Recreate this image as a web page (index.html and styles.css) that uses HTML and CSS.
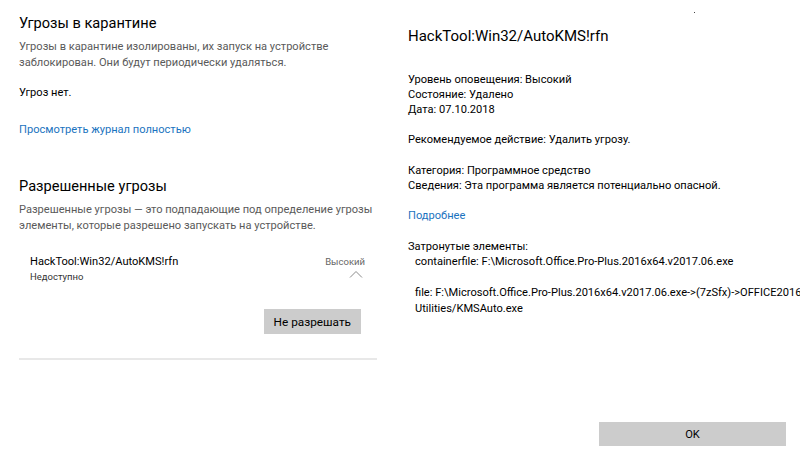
FILE: index.html
```html
<!DOCTYPE html>
<html lang="ru">
<head>
  <meta charset="UTF-8">
  <title>Защита от вирусов и угроз</title>
  <link rel="stylesheet" href="styles.css">
</head>
<body>
  <div class="page">
    <!-- left: quarantine + allowed threats -->
    <div class="left">
      <h1>Угрозы в карантине</h1>
      <p class="desc">Угрозы в карантине изолированы, их запуск на устройстве заблокирован. Они будут периодически удаляться.</p>
      <p class="none">Угроз нет.</p>
      <a class="link" href="#">Просмотреть журнал полностью</a>

      <h1 class="second">Разрешенные угрозы</h1>
      <p class="desc">Разрешенные угрозы — это подпадающие под определение угрозы элементы, которые разрешено запускать на устройстве.</p>

      <div class="threat">
        <div class="threat-head">
          <div>
            <div class="threat-name">HackTool:Win32/AutoKMS!rfn</div>
            <div class="threat-state">Недоступно</div>
          </div>
          <div class="threat-level">
            <span>Высокий</span>
            <svg class="chevron" width="14" height="8" viewBox="0 0 14 8"><path d="M1 7.5 L7 1.5 L13 7.5" fill="none" stroke="#8a8a8a" stroke-width="1"/></svg>
          </div>
        </div>
        <div class="threat-actions">
          <button class="btn">Не разрешать</button>
        </div>
      </div>
      <div class="divider"></div>
    </div>

    <!-- right: details dialog -->
    <div class="right">
      <span class="dot"></span>
      <h2>HackTool:Win32/AutoKMS!rfn</h2>
      <div class="group first">
        <div>Уровень оповещения: Высокий</div>
        <div>Состояние: Удалено</div>
        <div>Дата: 07.10.2018</div>
      </div>
      <div class="group g2">
        <div>Рекомендуемое действие: Удалить угрозу.</div>
      </div>
      <div class="group">
        <div>Категория: Программное средство</div>
        <div>Сведения: Эта программа является потенциально опасной.</div>
      </div>
      <div class="group g2">
        <a class="link" href="#">Подробнее</a>
      </div>
      <div class="group">
        <div>Затронутые элементы:</div>
        <div class="item">containerfile: F:\Microsoft.Office.Pro-Plus.2016x64.v2017.06.exe</div>
      </div>
      <div class="group files">
        <div class="item">file: F:\Microsoft.Office.Pro-Plus.2016x64.v2017.06.exe-&gt;(7zSfx)-&gt;OFFICE2016/</div>
        <div class="item">Utilities/KMSAuto.exe</div>
      </div>
      <div class="footer">
        <button class="btn ok">OK</button>
      </div>
    </div>
  </div>
</body>
</html>
```

FILE: styles.css
```css
body {
  margin: 0;
  font-family: Roboto, "Noto Sans", sans-serif;
  background: #fff;
  color: #000;
}
.page {
  display: flex;
  width: 800px;
  height: 455px;
  overflow: hidden;
}
.left {
  width: 358px;
  padding: 11px 24px 0 19px;
  flex-shrink: 0;
}
h1 {
  margin: 0;
  font-size: 14.6px;
  font-weight: normal;
  line-height: 24px;
}
h1.second {
  margin-top: 36px;
}
.desc {
  margin: 4px 0 0;
  font-size: 11.1px;
  line-height: 16px;
  color: #5a5a5a;
}
.none {
  margin: 14px 0 0;
  font-size: 11.1px;
  line-height: 16px;
}
.link {
  display: block;
  margin-top: 21px;
  font-size: 11.1px;
  line-height: 16px;
  color: #1a73c0;
  text-decoration: none;
}
.threat {
  margin-top: 20px;
  padding: 0 12px 0 11px;
}
.threat-head {
  display: flex;
  justify-content: space-between;
}
.threat-name {
  font-size: 11.1px;
  line-height: 16px;
}
.threat-state {
  font-size: 9.5px;
  line-height: 14px;
  color: #333;
}
.threat-level {
  display: flex;
  flex-direction: column;
  align-items: flex-end;
  font-size: 9.5px;
  line-height: 16px;
  color: #666;
}
.chevron {
  margin: 0 2px 0 0;
}
.threat-actions {
  display: flex;
  justify-content: flex-end;
  margin-top: 25px;
  padding-right: 4px;
}
.btn {
  font-family: inherit;
  font-size: 11.8px;
  height: 25px;
  padding: 0 10px;
  border: none;
  background: #cccccc;
  color: #000;
}
.divider {
  margin-top: 24px;
  height: 2px;
  background: #e8e8e8;
}
.right {
  flex: 1;
  position: relative;
  display: flex;
  flex-direction: column;
  padding: 25px 0 9px 7px;
  min-width: 0;
  font-size: 11.1px;
  line-height: 15px;
  white-space: nowrap;
}
.dot {
  position: absolute;
  left: 293px;
  top: 12px;
  width: 1px;
  height: 1px;
  background: #444;
}
h2 {
  margin: 0;
  font-size: 15px;
  font-weight: normal;
  line-height: 22px;
}
.group {
  margin-top: 16px;
}
.group.g2 {
  margin-top: 15px;
}
.group.first {
  margin-top: 25px;
}
.group .link {
  margin-top: 0;
  line-height: 15px;
}
.item {
  padding-left: 7px;
}
.files {
  margin-top: 16px;
  line-height: 16px;
}
.footer {
  margin-top: auto;
  display: flex;
  justify-content: flex-end;
  padding-right: 14px;
}
.btn.ok {
  width: 187px;
  height: 24px;
  font-size: 11.1px;
}
```
